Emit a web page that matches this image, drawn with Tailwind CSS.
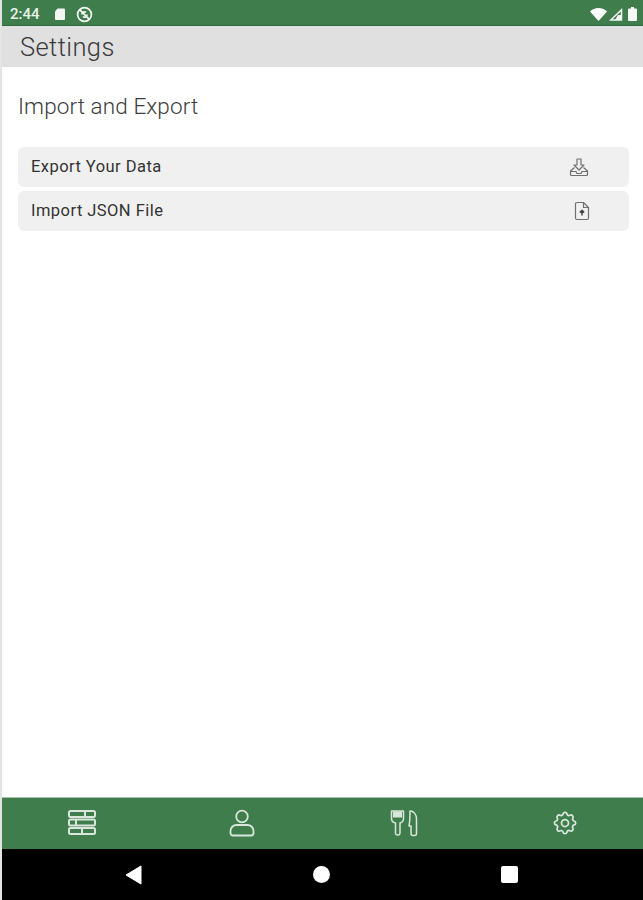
<!DOCTYPE html>
<html lang="en">
<head>
  <meta charset="UTF-8" />
  <meta name="viewport" content="width=device-width, initial-scale=1.0" />
  <title>Settings</title>
  <script src="https://cdn.jsdelivr.net/npm/@tailwindcss/browser@4"></script>
</head>
<body class="bg-white font-['Roboto',sans-serif]">
  <div class="w-[643px] h-[900px] flex flex-col overflow-hidden border-l-2 border-[#e4e4e4]">

    <!-- Status bar -->
    <div class="h-[26px] bg-[#3f7d4c] border-b border-[#2f6a3c] flex items-center text-white pl-[8px] pr-[6px] pt-[3px]">
      <span class="text-[15px] font-medium text-[#e8f2ea]">2:44</span>
      <svg class="ml-[14px]" width="12" height="14" viewBox="0 0 12 13" fill="#f2f7f3"><path d="M3.500 1H10a1 1 0 0 1 1 1v9.500a1 1 0 0 1-1 1H2a1 1 0 0 1-1-1V4z"/></svg>
      <svg class="ml-[10px]" width="17" height="17" viewBox="0 0 16 16" fill="none" stroke="#f2f7f3" stroke-width="1.600"><circle cx="8" cy="8" r="6.500"/><path d="M3.500 3.500l9 9"/><path d="M5.500 8a2.500 2.500 0 0 1 4-2M10.500 8a2.500 2.500 0 0 1-4 2"/></svg>
      <div class="ml-auto flex items-center gap-[2px]">
        <svg width="17" height="13" viewBox="0 0 17 13" fill="#ffffff"><path d="M0 3.500C2 1.500 5 0 8.500 0S15 1.500 17 3.500L8.500 13z"/></svg>
        <svg width="14" height="13" viewBox="0 0 14 13" fill="none" stroke="#f2f7f3" stroke-width="1.500"><path d="M1.800 12L12.500 1.800V12z"/><path d="M9 7l3 0v5H6z" fill="#f2f7f3" stroke="none"/></svg>
        <svg class="ml-[3px]" width="9" height="14" viewBox="0 0 9 14" fill="#f5f8f5"><path d="M3 0h3v1.500h2a1 1 0 0 1 1 1V13a1 1 0 0 1-1 1H1a1 1 0 0 1-1-1V2.500a1 1 0 0 1 1-1h2z"/></svg>
      </div>
    </div>

    <!-- Title bar -->
    <div class="h-[41px] bg-[#e0e0e0] flex items-center pl-[18px] pt-[1px]">
      <h1 class="text-[25.500px] font-light text-[#3a3a3a] tracking-[0.4px]">Settings</h1>
    </div>

    <!-- Content -->
    <div class="flex-1 pl-[16px] pr-[14px]">
      <h2 class="mt-[24px] h-[30px] text-[22.500px] leading-[30px] font-light text-[#3c3c3c] tracking-[0.1px]">Import and Export</h2>

      <div class="mt-[26px] flex flex-col gap-[4px]">
        <div class="h-[40px] rounded-[6px] bg-[#f0f0f0] flex items-center justify-between pl-[13px] pr-[40px]">
          <span class="text-[16.500px] text-[#333333] tracking-[0.45px]">Export Your Data</span>
          <svg width="20" height="20" viewBox="0 0 20 20" fill="none" stroke="#6f6f6f" stroke-width="1.200" stroke-linejoin="round">
            <path d="M8 2h4v6h3l-5 5-5-5h3z"/>
            <path d="M5.500 10.500L1.500 14v3.500a1 1 0 0 0 1 1h15a1 1 0 0 0 1-1V14l-4-3.500"/>
            <path d="M1.500 14.500h5.500l1 2h4l1-2h5"/>
          </svg>
        </div>
        <div class="h-[40px] rounded-[6px] bg-[#f0f0f0] flex items-center justify-between pl-[13px] pr-[39px]">
          <span class="text-[16.500px] text-[#333333] tracking-[0.45px]">Import JSON File</span>
          <svg width="16" height="20" viewBox="0 0 16 20" fill="none" stroke="#6f6f6f" stroke-width="1.200" stroke-linejoin="round">
            <path d="M3 1.500h6.500l5 5V17a1.500 1.500 0 0 1-1.500 1.500H3A1.500 1.500 0 0 1 1.500 17V3A1.500 1.500 0 0 1 3 1.500z"/>
            <path d="M9.500 1.500v5h5"/>
            <path d="M8 14.500v-5M5.800 11.500L8 9.300l2.200 2.200" stroke="#444444" stroke-width="1.500"/>
          </svg>
        </div>
      </div>
    </div>

    <!-- Bottom tabs -->
    <div class="h-[52px] bg-[#3f7d4c] border-t border-[#a9c4ae] grid grid-cols-4 items-center pb-[2px]">
      <div class="flex justify-center">
        <svg width="30" height="27" viewBox="0 0 30 27" fill="none" stroke="#d9e6db" stroke-width="2">
          <rect x="2" y="2" width="26" height="6" rx="1.500"/>
          <rect x="2" y="10.500" width="26" height="6" rx="1.500"/>
          <rect x="2" y="19" width="26" height="6" rx="1.500"/>
          <path d="M18 2v6M9 10.500v6M15 19v6"/>
        </svg>
      </div>
      <div class="flex justify-center">
        <svg width="26" height="28" viewBox="0 0 26 28" fill="none" stroke="#d9e6db" stroke-width="1.800">
          <circle cx="13" cy="7.500" r="5.800"/>
          <path d="M7.500 16h11a6 6 0 0 1 6 6v2a2.500 2.500 0 0 1-2.500 2.500H4A2.500 2.500 0 0 1 1.500 24v-2a6 6 0 0 1 6-6z"/>
        </svg>
      </div>
      <div class="flex justify-center">
        <svg class="ml-[2px]" width="28" height="28" viewBox="0 0 28 28" fill="none" stroke="#d9e6db" stroke-width="1.500" stroke-linejoin="round">
          <path d="M1.500 2h12v7.500c0 2.500-1.800 4-3.500 4.500v10.500a2 2 0 0 1-2 1.500h-.5a2 2 0 0 1-2-1.500V14C3.300 13.500 1.500 12 1.500 9.500z"/>
          <path d="M3 2.500h9v6H3z" fill="#d9e6db" stroke="none"/>
          <path d="M20 2c3.500 0 6.500 3 6.500 8v14.500a2 2 0 0 1-2 2H23a2 2 0 0 1-2-2V17h-2c.8-4 1-10 1-15z"/>
        </svg>
      </div>
      <div class="flex justify-center">
        <svg class="ml-[4px]" width="28" height="28" viewBox="0 0 24 24" fill="none" stroke="#d9e6db" stroke-width="1.500" stroke-linecap="round" stroke-linejoin="round">
          <path d="M10.300 4.300c.4-1.800 3-1.800 3.400 0a1.700 1.700 0 0 0 2.600 1.100c1.500-.9 3.300.8 2.400 2.400a1.700 1.700 0 0 0 1.100 2.500c1.800.4 1.800 3 0 3.400a1.700 1.700 0 0 0-1.100 2.600c.9 1.500-.8 3.300-2.400 2.400a1.700 1.700 0 0 0-2.600 1.100c-.4 1.800-3 1.800-3.400 0a1.700 1.700 0 0 0-2.500-1.100c-1.500.9-3.300-.8-2.400-2.400a1.700 1.700 0 0 0-1.100-2.600c-1.800-.4-1.800-3 0-3.400a1.700 1.700 0 0 0 1.100-2.500c-.9-1.500.8-3.300 2.400-2.400a1.700 1.700 0 0 0 2.500-1.100z"/>
          <circle cx="12" cy="12" r="3"/>
        </svg>
      </div>
    </div>

    <!-- Android nav bar -->
    <div class="h-[51px] -ml-[2px] bg-black grid grid-cols-3 items-center px-[40px]">
      <div class="flex justify-center">
        <svg width="17" height="20" viewBox="0 0 17 20" fill="#ffffff"><path d="M16 1v18L1 10z" stroke="#ffffff" stroke-linejoin="round"/></svg>
      </div>
      <div class="flex justify-center">
        <div class="w-[17px] h-[17px] rounded-full bg-white"></div>
      </div>
      <div class="flex justify-center">
        <div class="w-[17px] h-[17px] rounded-[2px] bg-white"></div>
      </div>
    </div>
  </div>
</body>
</html>
